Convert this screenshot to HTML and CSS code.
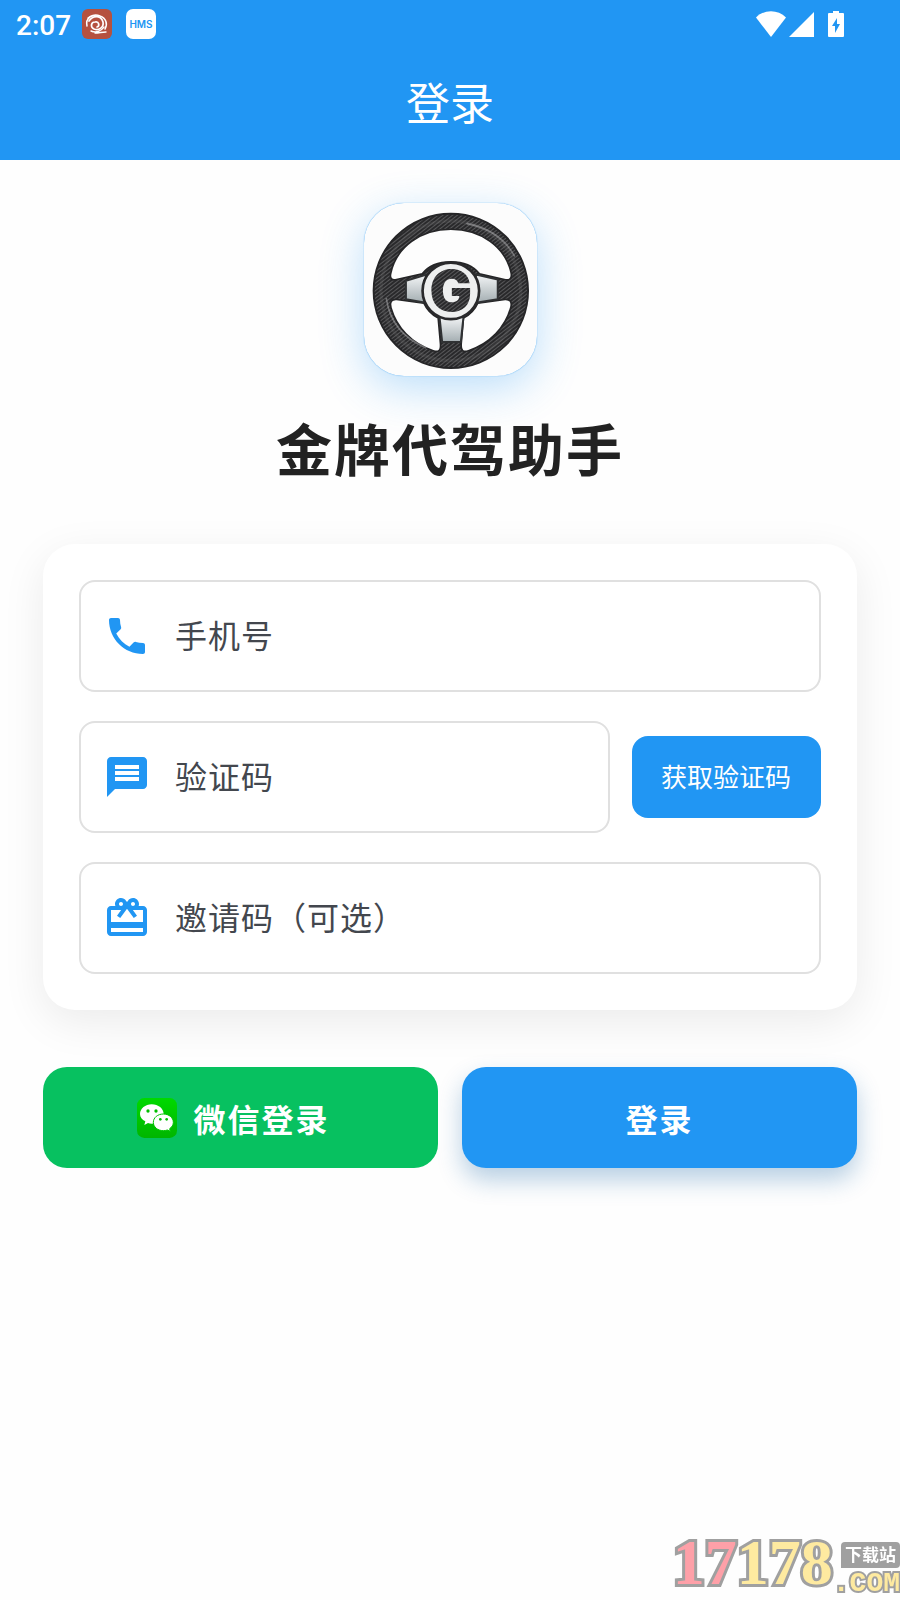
FILE: index.html
```
<!DOCTYPE html>
<html lang="zh-CN">
<head>
    <meta charset="UTF-8">
    <meta name="viewport" content="width=device-width, initial-scale=1.0">
    <title>登录</title>
    <link rel="stylesheet" href="styles.css">
</head>
<body>
    <header class="app-header">
        <div class="status-bar">
            <span class="time">2:07</span>
            <svg class="notice-icon" viewBox="0 0 30 30">
                <rect width="30" height="30" rx="6" fill="#b5513f"/>
                <g fill="none" stroke="#fff" stroke-linecap="round">
                    <path d="M5 17C3 9 11 4 18 7c6 2 8 8 5 13" stroke-width="1.5"/>
                    <path d="M7 12c4-6 12-6 14 1 1 5-4 9-9 7-4-2-3-7 1-7 4-1 5 4 2 5" stroke-width="1.7"/>
                    <path d="M6 9c3-3 8-3 11-1M9 22c5 2 10 0 13-4M13 24c4 0 7-1 11-1" stroke-width="1.4"/>
                </g>
            </svg>
            <svg class="notice-icon" viewBox="0 0 30 30">
                <rect width="30" height="30" rx="7" fill="#fff"/>
                <text class="hms" x="15" y="19" text-anchor="middle">HMS</text>
            </svg>
            <div class="system-icons">
                <svg width="30" height="26" viewBox="0 0 30 26">
                    <path d="M0 6.5C8-2 22-2 30 6.5L15 26z" fill="#fff"/>
                </svg>
                <svg width="26" height="26" viewBox="0 0 26 26">
                    <path d="M0 26L25 1v25z" fill="#fff"/>
                </svg>
                <svg class="battery" width="16" height="26" viewBox="0 0 16 26">
                    <path d="M5 0h6v2h4q1 0 1 1v22q0 1-1 1H1q-1 0-1-1V3q0-1 1-1h4z" fill="#fff"/>
                    <path d="M9 7L4 15h3v7l5-9H9z" fill="#2196f3"/>
                </svg>
            </div>
        </div>
        <h1 class="page-title">登录</h1>
    </header>

    <main class="content">
        <!-- Logo -->
        <svg class="logo" viewBox="70 68 520 520">
            <defs>
                <pattern id="carbon" width="9" height="9" patternUnits="userSpaceOnUse" patternTransform="rotate(-38)">
                    <rect width="9" height="9" fill="#29292b"/>
                    <rect width="9" height="3" fill="#58585a"/>
                </pattern>
                <linearGradient id="steel" x1="0" y1="0" x2="0" y2="1">
                    <stop offset="0" stop-color="#f3f5f6"/>
                    <stop offset="1" stop-color="#a3adb1"/>
                </linearGradient>
            </defs>
            <circle cx="331" cy="332" r="232" fill="url(#carbon)" stroke="#252527" stroke-width="6"/>
            <circle cx="331" cy="332" r="210" fill="none" stroke="#77777a" stroke-width="10" stroke-opacity=".2"/>
            <g fill="#fdfdfd" stroke="#252527" stroke-width="5">
                <path d="M151 277C168 201 240 147 331 147s164 54 181 130c4 18-5 25-20 21l-75-17c-18-23-48-36-86-36s-68 13-86 36l-77 17c-15 4-22-4-17-21z"/>
                <path d="M168 358l82 11c9 20 24 35 43 45l7 79c1 19-6 24-22 19-66-22-110-70-127-129-5-17 2-26 17-25z"/>
                <path d="M494 358l-82 11c-9 20-24 35-43 45l-7 79c-1 19 6 24 22 19 66-22 110-70 127-129 5-17-2-26-17-25z"/>
            </g>
            <g fill="url(#steel)" stroke="#303234" stroke-width="6">
                <path d="M196 302l60-18v84l-60-11z"/>
                <path d="M472 298l-66-15v85l66-11z"/>
                <path d="M297 410h72l-8 76h-56z"/>
            </g>
            <circle cx="331" cy="332" r="85" fill="#eeefef" stroke="#29292b" stroke-width="8"/>
            <text class="logo-letter" x="331" y="394" text-anchor="middle" fill="url(#carbon)">G</text>
            <path d="M137 355c10 69 52 120 118 148M380 130c65 13 115 48 142 97" fill="none" stroke="#c4c4c6" stroke-width="5" stroke-opacity=".45" stroke-linecap="round"/>
        </svg>
        <h2 class="app-name">金牌代驾助手</h2>

        <form id="loginForm">
            <div class="form-card">
                <label class="field">
                    <svg class="field-icon" viewBox="0 0 24 24"><path d="M6.62 10.79c1.44 2.83 3.76 5.14 6.59 6.59l2.2-2.2c.27-.27.67-.36 1.02-.24 1.12.37 2.33.57 3.57.57.55 0 1 .45 1 1V20c0 .55-.45 1-1 1-9.39 0-17-7.61-17-17 0-.55.45-1 1-1h3.5c.55 0 1 .45 1 1 0 1.25.2 2.45.57 3.57.11.35.03.74-.25 1.02l-2.2 2.2z"/></svg>
                    <input type="tel" placeholder="手机号" aria-label="手机号">
                </label>
                <div class="code-row">
                    <label class="field">
                        <svg class="field-icon" viewBox="0 0 24 24"><path d="M20 2H4c-1.1 0-1.99.9-1.99 2L2 22l4-4h14c1.1 0 2-.9 2-2V4c0-1.1-.9-2-2-2zM6 9h12v2H6V9zm12 5H6v-2h12v2zm0-6H6V6h12v2z"/></svg>
                        <input type="text" inputmode="numeric" placeholder="验证码" aria-label="验证码">
                    </label>
                    <button type="button" class="code-btn">获取验证码</button>
                </div>
                <label class="field">
                    <svg class="field-icon" viewBox="0 0 24 24"><path d="M20 6h-2.18c.11-.31.18-.65.18-1 0-1.66-1.34-3-3-3-1.05 0-1.96.54-2.5 1.35l-.5.67-.5-.68C10.96 2.54 10.05 2 9 2 7.34 2 6 3.34 6 5c0 .35.07.69.18 1H4c-1.11 0-1.99.89-1.99 2L2 19c0 1.11.89 2 2 2h16c1.11 0 2-.89 2-2V8c0-1.11-.89-2-2-2zm-5-2c.55 0 1 .45 1 1s-.45 1-1 1-1-.45-1-1 .45-1 1-1zM9 4c.55 0 1 .45 1 1s-.45 1-1 1-1-.45-1-1 .45-1 1-1zm11 15H4v-2h16v2zm0-5H4V8h5.08L7 10.83 8.62 12 11 8.76l1-1.36 1 1.36L15.38 12 17 10.83 14.92 8H20v6z"/></svg>
                    <input type="text" placeholder="邀请码（可选）" aria-label="邀请码（可选）">
                </label>
            </div>

            <div class="actions">
                <button type="button" class="action-btn wechat-btn">
                    <svg class="wechat-icon" viewBox="0 0 120 120">
                        <defs>
                            <linearGradient id="wechatGreen" x1="0" y1="0" x2="0" y2="1">
                                <stop offset="0" stop-color="#00d900"/>
                                <stop offset="1" stop-color="#00b500"/>
                            </linearGradient>
                        </defs>
                        <rect width="120" height="120" rx="22" fill="url(#wechatGreen)"/>
                        <path d="M44 19c20 0 36 13 36 29S64 77 44 77q-6 0-11-2l-11 6 3-11C15 65 9 57 9 48c0-16 16-29 35-29z" fill="#fff"/>
                        <path d="M79 48c17 0 30 11 30 25 0 8-4 14-11 19l2 8-9-4q-6 2-12 2c-17 0-30-11-30-25s13-25 30-25z" fill="#fff" stroke="#00c300" stroke-width="3"/>
                        <g fill="#00c000">
                            <circle cx="33" cy="39" r="5"/>
                            <circle cx="57" cy="39" r="5"/>
                            <circle cx="70" cy="64" r="4"/>
                            <circle cx="89" cy="64" r="4"/>
                        </g>
                    </svg>
                    微信登录
                </button>
                <button type="submit" class="action-btn login-btn">登录</button>
            </div>
        </form>
    </main>

    <!-- Download site mark -->
    <div class="site-mark">
        <div class="mark-number"><span class="mark-pink">17</span><span>178</span></div>
        <div class="mark-side">
            <span class="mark-tag">下载站</span>
            <span class="mark-com">.COM</span>
        </div>
    </div>

    <script>
        document.getElementById('loginForm').addEventListener('submit', (e) => {
            e.preventDefault();
        });
    </script>
</body>
</html>
```
FILE: styles.css
```
* {
    margin: 0;
    padding: 0;
    box-sizing: border-box;
}

body {
    min-height: 100vh;
    background-color: #fefefe;
    color: #222;
    font-family: Roboto, 'Noto Sans CJK SC', sans-serif;
}

.app-header {
    background-color: #2196f3;
    color: white;
}

.status-bar {
    display: flex;
    align-items: center;
    height: 48px;
    padding: 0 56px 0 16px;
}

.time {
    font-size: 28px;
    font-weight: 500;
    line-height: 44px;
    padding-top: 4px;
    margin-right: 11px;
}

.notice-icon {
    width: 30px;
    height: 30px;
    margin-right: 14px;
}

.hms {
    font-family: Inter, sans-serif;
    font-size: 10px;
    font-weight: 600;
    fill: #2196f3;
}

.system-icons {
    display: flex;
    align-items: center;
    gap: 3px;
    margin-left: auto;
}

.battery {
    margin-left: 10px;
}

.page-title {
    padding-top: 2px;
    font-size: 44px;
    font-weight: 400;
    line-height: 110px;
    text-align: center;
}

.content {
    padding: 43px;
}

.logo {
    display: block;
    width: 173px;
    height: 173px;
    margin: 0 auto 40px;
    border-radius: 40px;
    background-color: #fcfcfc;
    box-shadow: 0 0 1px #2196f3, 0 12px 44px rgba(33, 150, 243, 0.3);
}

.logo-letter {
    font-family: Inter, sans-serif;
    font-size: 170px;
    font-weight: 900;
}

.app-name {
    font-size: 56px;
    font-weight: bold;
    line-height: 72px;
    letter-spacing: 2px;
    text-align: center;
    margin-bottom: 56px;
}

.form-card {
    display: flex;
    flex-direction: column;
    gap: 29px;
    padding: 36px;
    border-radius: 32px;
    background-color: white;
    box-shadow: 0 12px 44px rgba(0, 0, 0, 0.08);
}

.field {
    display: flex;
    align-items: center;
    gap: 24px;
    height: 112px;
    padding: 0 22px;
    border: 2px solid #e0e0e0;
    border-radius: 16px;
}

.field-icon {
    flex: none;
    width: 48px;
    height: 48px;
    fill: #2196f3;
}

.field input {
    flex: 1;
    min-width: 0;
    height: 100%;
    padding-top: 2px;
    border: none;
    outline: none;
    background: none;
    color: #222;
    font-family: inherit;
    font-size: 32px;
    letter-spacing: 1px;
}

.field input::placeholder {
    color: #43474e;
    opacity: 1;
}

.code-row {
    display: flex;
    align-items: center;
    gap: 22px;
}

.code-row .field {
    flex: 1;
}

.code-btn {
    height: 82px;
    padding: 0 30px 4px 29px;
    border: none;
    border-radius: 16px;
    background-color: #2196f3;
    color: white;
    font-family: inherit;
    font-size: 26px;
    cursor: pointer;
}

.actions {
    display: grid;
    grid-template-columns: 1fr 1fr;
    gap: 24px;
    margin-top: 57px;
}

.action-btn {
    display: flex;
    align-items: center;
    justify-content: center;
    gap: 16px;
    height: 101px;
    border: none;
    border-radius: 24px;
    color: white;
    font-family: inherit;
    font-size: 32px;
    font-weight: bold;
    letter-spacing: 2px;
    cursor: pointer;
}

.wechat-btn {
    padding-right: 14px;
    background-color: #07c160;
}

.wechat-icon {
    width: 40px;
    height: 40px;
}

.login-btn {
    background-color: #2196f3;
    box-shadow: 0 12px 24px rgba(20, 100, 165, 0.3);
}

.site-mark {
    position: fixed;
    right: 0;
    bottom: 0;
    display: flex;
    align-items: flex-end;
    color: #feeaa0;
    font-weight: bold;
}

.mark-number {
    font-family: 'Liberation Serif', serif;
    font-size: 64px;
    line-height: 74px;
    -webkit-text-stroke: 6px #a0a0a0;
    paint-order: stroke fill;
}

.mark-pink {
    color: #fea0a8;
}

.mark-side {
    display: flex;
    flex-direction: column;
    align-items: flex-end;
}

.mark-tag {
    padding: 0 4px;
    border-radius: 4px 4px 4px 0;
    background-color: #a0a0a0;
    color: white;
    font-size: 17px;
    line-height: 26px;
}

.mark-com {
    font-family: 'Liberation Mono', monospace;
    font-size: 28px;
    line-height: 32px;
    -webkit-text-stroke: 4px #a0a0a0;
    paint-order: stroke fill;
}
```
